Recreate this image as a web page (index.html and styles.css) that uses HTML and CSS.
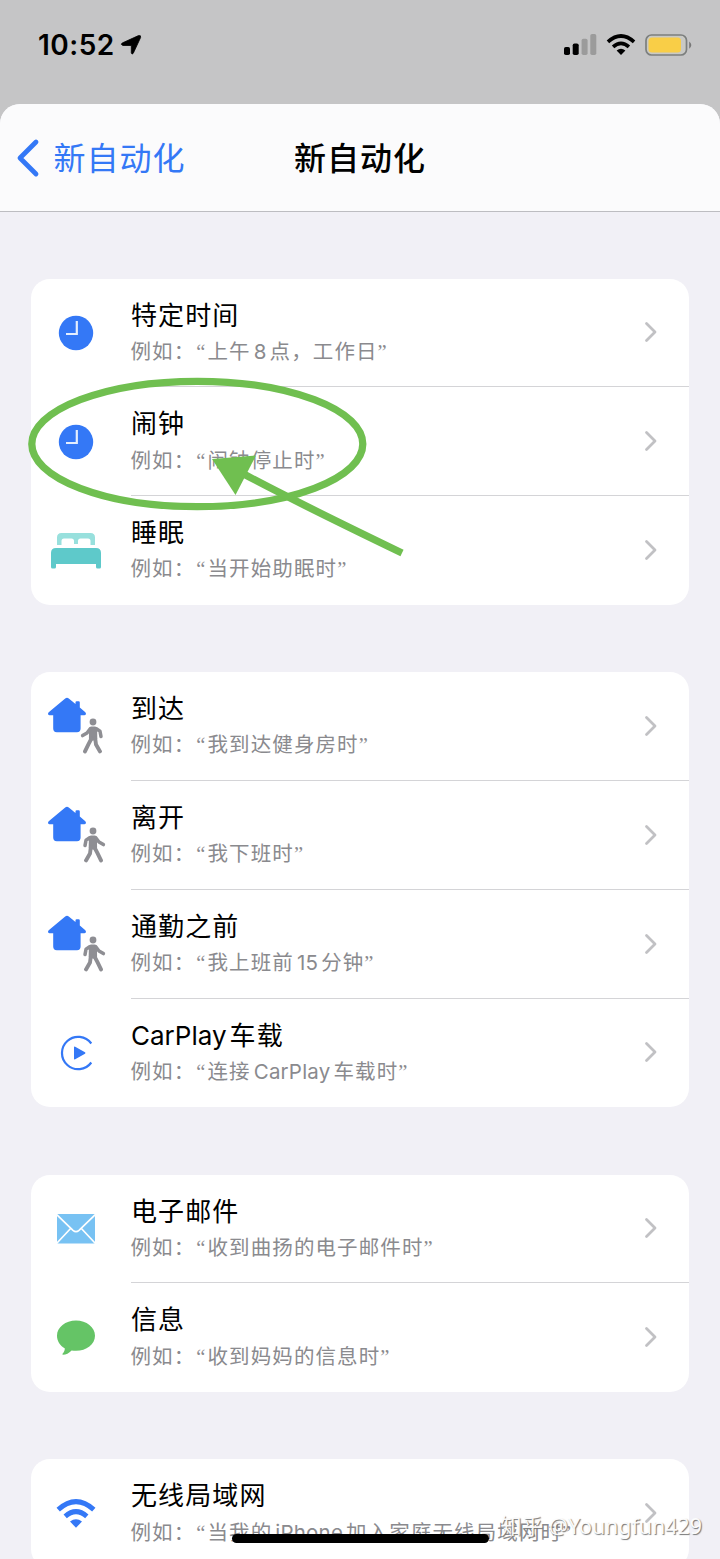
FILE: index.html
```html
<!DOCTYPE html>
<html lang="zh-CN">
<head>
<meta charset="utf-8">
<title>新自动化</title>
<link rel="stylesheet" href="styles.css">
</head>
<body>
<svg class="defs" aria-hidden="true">
  <symbol id="clock" viewBox="0 0 36 36"><circle cx="18" cy="18" r="17.2" fill="#3478f6"/><path d="M18.800 6v13H8" fill="none" stroke="#e4eefe" stroke-width="2.2"/></symbol>
  <symbol id="house" viewBox="0 0 40 36"><path d="M18.2 1.5Q20 0 21.8 1.5L28.5 7V5.4Q28.5 4.2 29.7 4.2H31.6Q32.8 4.2 32.8 5.4V10.6L38.3 15.2Q40 17.6 37.5 18.2H33.6V31.5Q33.6 35.2 30 35.2H9.8Q6.2 35.2 6.2 31.5V18.2H2.4Q0 17.6 1.7 15.2Z" fill="#3478f6"/></symbol>
  <symbol id="walk" viewBox="0 0 26 36"><g fill="none" stroke="#8e8e93" stroke-linecap="round" stroke-linejoin="round"><circle cx="11" cy="4" r="3.4" fill="#8e8e93" stroke="none"/><path d="M9 10.500L12.800 10.500L13 20.500L8.800 20.500Z" fill="#8e8e93" stroke-width="4.200"/><path d="M7.600 10.800L4 13.200L3 18.600M13.800 10.800L17 15L21.400 17.600" stroke-width="3.500"/><path d="M8.800 20.500L8 26.600L4 33.400M12.500 20.500L15.600 26.400L19 33.400" stroke-width="3.900"/></g></symbol>
  <symbol id="wifi" viewBox="0 0 40 30"><g fill="none" stroke="currentColor"><path d="M2.2 10.7Q20-5.3 37.8 10.7" stroke-width="5"/><path d="M9.2 17.4Q20 8 30.8 17.4" stroke-width="5"/></g><path d="M14 22.5Q20 17.8 26 22.5L20 28.8Z" fill="currentColor"/></symbol>
  <symbol id="next" viewBox="0 0 14 22"><path d="M2.5 2.5L11 11L2.5 19.5" fill="none" stroke="#c1c1c4" stroke-width="2.8" stroke-linecap="round" stroke-linejoin="round"/></symbol>
</svg>

<header class="status">
  <div class="clock"><span>10:52</span>
    <svg class="location" viewBox="0 0 20 20"><path d="M1.200 8L17.500 .6Q20.300 0 19.600 2.500L12.300 18.200Q11 20.200 10.300 17.800V10.500H2Q-.8 9.500 1.200 8Z" stroke="#000" stroke-width=".8"/></svg>
  </div>
  <div class="indicators">
    <svg class="signal" viewBox="0 0 34 22"><rect x="1" y="13" width="6" height="8" rx="1.8"/><rect x="9.7" y="9.5" width="6" height="11.5" rx="1.8"/><rect x="18.6" y="4.7" width="6" height="16.3" rx="1.8" fill="#9b9b9b"/><rect x="27.3" y="0" width="6" height="21" rx="1.8" fill="#9b9b9b"/></svg>
    <svg class="wifi-status"><use href="#wifi"/></svg>
    <svg class="battery" viewBox="0 0 48 22"><rect x="1" y="1" width="40.5" height="20" rx="5.5" fill="#c9c9c4" stroke="#7c7f7e" stroke-width="1.7"/><rect x="3.5" y="3.5" width="32.5" height="15" rx="3.5" fill="#f9ce47"/><path d="M44.2 7.5Q48.4 11 44.2 14.8Z" fill="#777"/></svg>
  </div>
</header>

<main class="sheet">
  <nav class="navbar">
    <a class="back"><svg class="back-icon" viewBox="0 0 24 38"><path d="M20 3L4 19L20 35" fill="none" stroke="#3478f6" stroke-width="4.8" stroke-linecap="round" stroke-linejoin="round"/></svg><span class="nav-label">新自动化</span></a>
    <h1 class="nav-title">新自动化</h1>
  </nav>

  <div class="groups">
    <section class="card">
      <div class="row"><div class="icon"><svg class="i-clock"><use href="#clock"/></svg></div><div class="text"><h2>特定时间</h2><p>例如：<q>上午<span class="latin">8</span>点，工作日</q></p></div><svg class="next"><use href="#next"/></svg></div>
      <div class="row"><div class="icon"><svg class="i-clock"><use href="#clock"/></svg></div><div class="text"><h2>闹钟</h2><p>例如：<q>闹钟停止时</q></p></div><svg class="next"><use href="#next"/></svg></div>
      <div class="row"><div class="icon"><svg class="i-bed" viewBox="0 0 52 38"><path d="M7 13V5.5Q7 1 11.500 1H40.500Q45 1 45 5.500V13H40.500V9Q40.500 6.500 38 6.500H30.500Q28 6.500 28 9V12H24V9Q24 6.500 21.500 6.500H14Q11.500 6.500 11.500 9V13Z" fill="#98e0dd"/><path d="M1 21Q1 16 6 16H46Q51 16 51 21V35Q51 36.500 49.500 36.500H47.500Q46 36.500 46 35V32H6V35Q6 36.500 4.500 36.500H2.500Q1 36.500 1 35Z" fill="#5ec9ca"/></svg></div><div class="text"><h2>睡眠</h2><p>例如：<q>当开始助眠时</q></p></div><svg class="next"><use href="#next"/></svg></div>
    </section>

    <section class="card">
      <div class="row"><div class="icon pair"><svg class="i-house"><use href="#house"/></svg><svg class="i-walk arriving"><use href="#walk"/></svg></div><div class="text"><h2>到达</h2><p>例如：<q>我到达健身房时</q></p></div><svg class="next"><use href="#next"/></svg></div>
      <div class="row"><div class="icon pair"><svg class="i-house"><use href="#house"/></svg><svg class="i-walk"><use href="#walk"/></svg></div><div class="text"><h2>离开</h2><p>例如：<q>我下班时</q></p></div><svg class="next"><use href="#next"/></svg></div>
      <div class="row"><div class="icon pair"><svg class="i-house"><use href="#house"/></svg><svg class="i-walk"><use href="#walk"/></svg></div><div class="text"><h2>通勤之前</h2><p>例如：<q>我上班前<span class="latin">15</span>分钟</q></p></div><svg class="next"><use href="#next"/></svg></div>
      <div class="row"><div class="icon"><svg class="i-carplay" viewBox="0 0 36 36"><path d="M32.300 8.500A16.200 16.200 0 1 0 32.300 27.500" fill="none" stroke="#3478f6" stroke-width="2.200"/><path d="M15 12.200Q15 11 16.200 11.700L26 17.200Q27 18 26 18.700L16.200 24.300Q15 25 15 23.800Z" fill="#3478f6"/></svg></div><div class="text"><h2><span class="latin first">CarPlay</span>车载</h2><p>例如：<q>连接<span class="latin">CarPlay</span>车载时</q></p></div><svg class="next"><use href="#next"/></svg></div>
    </section>

    <section class="card">
      <div class="row"><div class="icon"><svg class="i-mail" viewBox="0 0 38 30"><rect width="38" height="29.500" rx="1.500" fill="#78c2f3"/><path d="M0 .8L16 16.300Q19 19 22 16.300L38 .8M0 29L13.600 14.500M38 29L24.400 14.500" fill="none" stroke="#fff" stroke-width="1.700"/></svg></div><div class="text"><h2>电子邮件</h2><p>例如：<q>收到曲扬的电子邮件时</q></p></div><svg class="next"><use href="#next"/></svg></div>
      <div class="row"><div class="icon"><svg class="i-bubble" viewBox="0 0 38 36"><path d="M19 .5C29.500 .5 38 7.200 38 15.700C38 24.200 29.500 30.800 19 30.800C17.500 30.800 16 30.700 14.600 30.400C12 33 9 34.700 6 34.800Q4.800 34.500 5.700 33.500C7.300 31.800 8 30 7.700 28.300C3 25.500 0 21 0 15.700C0 7.200 8.500 .5 19 .5Z" fill="#65c466"/></svg></div><div class="text"><h2>信息</h2><p>例如：<q>收到妈妈的信息时</q></p></div><svg class="next"><use href="#next"/></svg></div>
    </section>

    <section class="card">
      <div class="row"><div class="icon"><svg class="i-wifi"><use href="#wifi"/></svg></div><div class="text"><h2>无线局域网</h2><p>例如：<q>当我的<span class="latin">iPhone</span>加入家庭无线局域网时</q></p></div><svg class="next"><use href="#next"/></svg></div>
    </section>
  </div>
</main>

<svg class="markup" viewBox="0 0 720 1559"><g fill="none" stroke="#70bf50" stroke-width="7.300"><ellipse cx="197.300" cy="444" rx="165.500" ry="62.700"/><path d="M240 472Q290 499 402 553"/></g><path d="M212 459L256 455.500L235.500 495Z" fill="#70bf50"/></svg>
<div class="home-indicator"></div>
<div class="watermark">知乎 @Youngfun429</div>
</body>
</html>
```
FILE: styles.css
```css
* { box-sizing: border-box; }
body {
  margin: 0;
  width: 720px;
  height: 1559px;
  overflow: hidden;
  position: relative;
  background: #c5c5c6;
  font-family: Inter, "Noto Sans CJK SC", sans-serif;
  color: #000;
}
svg { display: block; flex: none; overflow: visible; }
.defs { position: absolute; width: 0; height: 0; }

.status {
  height: 104px;
  padding: 0 27px 15px 38px;
  display: flex;
  justify-content: space-between;
  align-items: center;
}
.clock { display: flex; align-items: center; gap: 6px; font-size: 28px; font-weight: 600; letter-spacing: 0.5px; }
.location { width: 20px; height: 20px; }
.indicators { display: flex; align-items: center; gap: 9px; }
.signal { width: 34px; height: 22px; }
.wifi-status { width: 30px; height: 22px; }
.battery { width: 48px; height: 22px; }

.sheet {
  height: 1455px;
  border-radius: 20px 20px 0 0;
  background: #f1f0f6;
  overflow: hidden;
}
.navbar {
  height: 108px;
  padding: 0 16px;
  display: grid;
  grid-template-columns: 1fr auto 1fr;
  align-items: center;
  background: #fbfbfc;
  border-bottom: 1px solid #bdbdc1;
}
.back { display: flex; align-items: center; gap: 13.5px; color: #3478f6; font-size: 32px; letter-spacing: 1px; }
.back-icon { width: 24px; height: 38px; }
.nav-label { padding-bottom: 4px; }
.nav-title { margin: 0; padding-bottom: 4px; font-size: 32px; font-weight: 500; letter-spacing: 1px; }

.groups { padding: 66.6px 31px 0; display: flex; flex-direction: column; gap: 67.2px; }
.card { background: #fff; border-radius: 19px; }
.row { height: 108.8px; flex: none; display: flex; align-items: center; }
.icon { width: 99.5px; height: 100%; display: flex; align-items: center; padding-right: 9px; justify-content: center; flex: none; }
.text { flex: 1; height: 100%; padding-top: 18px; border-bottom: 1px solid #d4d4d7; white-space: nowrap; min-width: 0; }
.row:last-child .text { border-bottom: 0; }
.text h2 { margin: 0; padding-left: 0.5px; font-size: 26px; font-weight: 400; line-height: 38px; letter-spacing: 1.1px; }
.text p { margin: 2.3px 0 0; font-family: "Liberation Serif", "Noto Sans CJK SC", sans-serif; font-size: 20.5px; line-height: 30px; letter-spacing: 1.1px; color: #8a8a8e; }
.text q { quotes: "“" "”"; margin-left: 1px; }
.text q::before { margin-right: 1px; }
.latin { margin: 0 3px 0 3px; font-family: Inter, sans-serif; letter-spacing: 0.2px; }
.latin.first { margin-left: 0; letter-spacing: 0; }
.next { width: 14px; height: 22px; margin: 0 31px 1px -45px; }

.i-clock { width: 36px; height: 36px; }
.i-bed { width: 52px; height: 38px; }
.pair { align-items: flex-start; justify-content: flex-start; padding: 25px 0 0 16px; }
.i-house { width: 40px; height: 36px; }
.i-walk { width: 26px; height: 36px; margin: 21px 0 0 -5px; }
.arriving { transform: translateX(-4px) scaleX(-1); }
.i-carplay { width: 36px; height: 36px; margin-left: 1px; }
.i-mail { width: 38px; height: 30px; }
.i-bubble { width: 38px; height: 36px; }
.i-wifi { width: 40px; height: 30px; color: #3478f6; }

.markup { position: absolute; left: 0; top: 0; width: 720px; height: 1559px; }
.home-indicator { position: absolute; left: 232px; top: 1534px; width: 257px; height: 9px; border-radius: 5px; background: #000; }
.watermark {
  position: absolute;
  right: 18px;
  top: 1511px;
  font-family: "Noto Sans", "Noto Sans CJK SC", sans-serif;
  font-size: 21.4px;
  line-height: 30px;
  white-space: nowrap;
  color: #fffffff2;
  text-shadow: 1px 1px 1px #777;
}
```
